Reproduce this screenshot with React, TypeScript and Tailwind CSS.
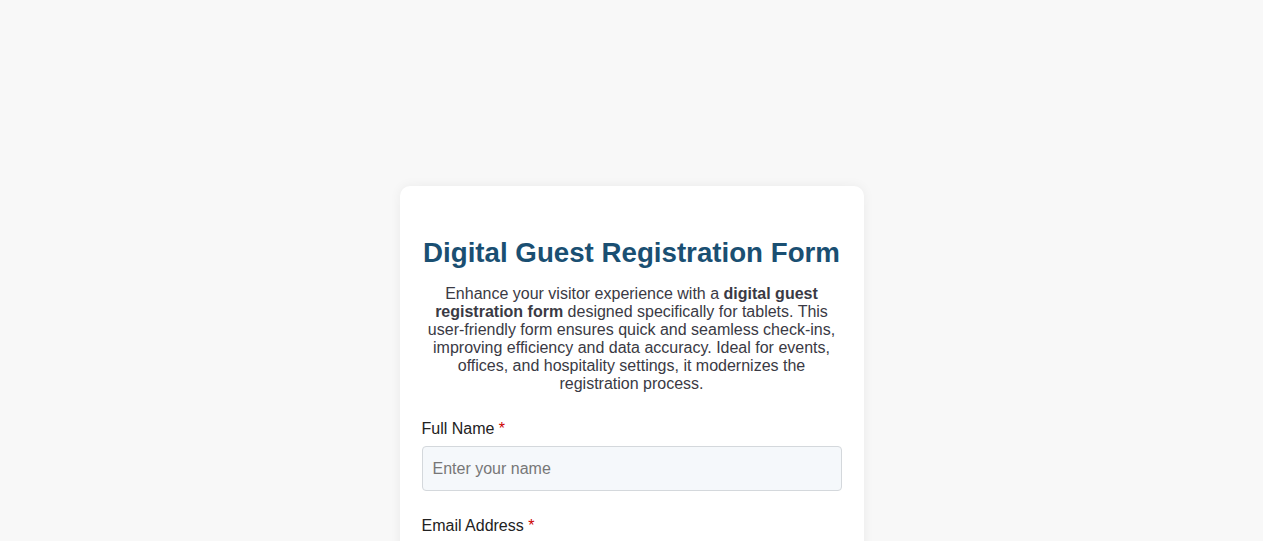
export default function App() {
  return (
    <div
      className="min-h-screen bg-[#f8f8f8] flex justify-center pt-[186px]"
      style={{ fontFamily: '"Liberation Sans", Arial, sans-serif' }}
    >
      <div className="w-[464px] bg-white rounded-[10px] shadow-[0_0_12px_rgba(0,0,0,0.06)] px-[22px] pt-[51px] pb-8 self-start">
        <h1 className="-mx-2 whitespace-nowrap text-center text-[27.7px] leading-[32px] font-bold text-[#1a4f72]">
          Digital Guest Registration Form
        </h1>
        <p className="mt-4 px-[5px] text-center text-base leading-[18px] text-[#3a3a44]">
          Enhance your visitor experience with a <strong>digital guest registration form</strong> designed specifically
          for tablets. This user-friendly form ensures quick and seamless check-ins, improving efficiency and data
          accuracy. Ideal for events, offices, and hospitality settings, it modernizes the registration process.
        </p>

        <form className="mt-[27px] flex flex-col gap-[26px]">
          <div>
            <label className="block text-base leading-[18px] text-[#222]">
              Full Name <span className="text-[#cc0000]">*</span>
            </label>
            <input
              type="text"
              placeholder="Enter your name"
              className="mt-2 w-full h-[45px] px-[10px] text-base bg-[#f5f8fb] border border-[#d4d8dc] rounded-[4px] placeholder:text-[#777] outline-none"
            />
          </div>
          <div>
            <label className="block text-base leading-[18px] text-[#222]">
              Email Address <span className="text-[#cc0000]">*</span>
            </label>
            <input
              type="email"
              placeholder="Enter your email"
              className="mt-2 w-full h-[45px] px-[10px] text-base bg-[#f5f8fb] border border-[#d4d8dc] rounded-[4px] placeholder:text-[#777] outline-none"
            />
          </div>
        </form>
      </div>
    </div>
  );
}
